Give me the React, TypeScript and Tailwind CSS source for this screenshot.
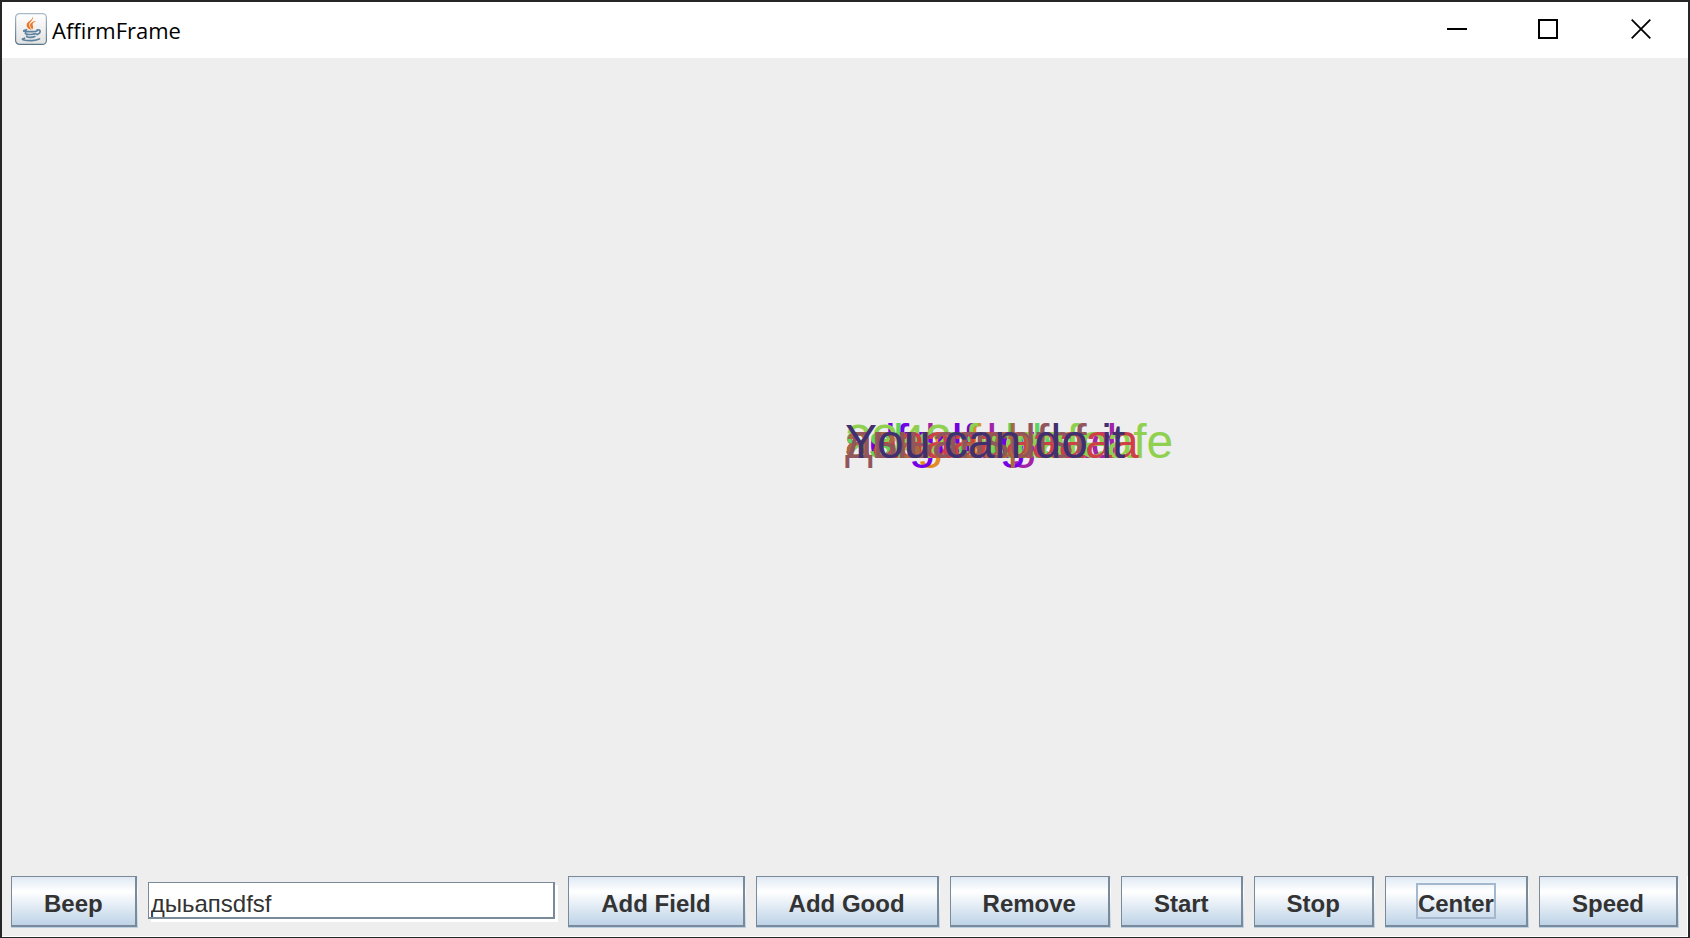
import React, { useState } from "react";

const phrases = [
  { text: "as ddskgaad", color: "text-[#a323a8]" },
  { text: "sssgsf", color: "text-[#e28c22]" },
  { text: "sdfgdfsg", color: "text-[#7300e6]" },
  { text: "ssksssddss", color: "text-[#5fd35f]" },
  { text: "2342 fweafeafe", color: "text-[#8fd14f]" },
  { text: "aaaaaaaaaaa", color: "text-[#cf3f48]" },
  { text: "авыаыф", color: "text-[#a86840]" },
  { text: "дыьапsdfsf", color: "text-[#91555c]" },
  { text: "You can do it", color: "text-[#403070]" },
];

function JavaIcon() {
  return (
    <svg viewBox="0 0 32 32" className="size-8" fill="none" aria-hidden="true">
      <defs>
        <linearGradient id="tile" x1="0" y1="0" x2="0" y2="1">
          <stop offset="0" stopColor="#ffffff" />
          <stop offset="1" stopColor="#e2e2e2" />
        </linearGradient>
        <linearGradient id="edge" x1="0" y1="0" x2="0" y2="1">
          <stop offset="0" stopColor="#a9bac8" />
          <stop offset="1" stopColor="#587489" />
        </linearGradient>
      </defs>
      <rect x="0.6" y="0.6" width="30.8" height="30.8" rx="4" fill="url(#tile)" stroke="url(#edge)" strokeWidth="1.2" />
      <path d="M17.800 3.500c1.400 3.500-3.600 5-3.600 8.300 0 2 1.400 3.200 2 5.200-3.200-1.500-5-3.200-4.500-5.600C12.300 8.300 17.600 7.500 17.800 3.500z" fill="#ee7625" />
      <path d="M21.500 7.800c-2.600 1.200-4.400 2.600-3.900 4.200.4 1.500 1.300 2.400-.6 4.900-.2-1.600-1.700-2.500-1.900-4.400-.2-2.400 2.800-4.200 6.400-4.700z" fill="#ee7625" />
      <path d="M11.500 16.700c-5 1.300-3 2 3.500 2 4 0 7-.6 7.500-1.200M22 17c4-1 4.300 3.200 0 4.600M10.500 20.200c-1 1.600 8 1.700 10.500.4M11.800 23.200c-.6 1.300 5.500 1.600 8 .3M9.500 25.200c-6 1.500 1.500 2.600 7.500 2.400 4-.1 6-.7 7.500-1.700" stroke="#5c829f" strokeWidth="1.700" strokeLinecap="round" />
    </svg>
  );
}

function PanelButton({ label, focused = false }: { label: string; focused?: boolean }) {
  return (
    <button
      type="button"
      className="flex h-[52px] shrink-0 bg-linear-to-b from-[#dde8f3] via-white via-30% to-[#b8cfe5] pr-px pb-px text-2xl leading-7 font-bold text-[#333333]"
    >
      <span className="flex h-full items-center border-t border-r-2 border-b-2 border-l border-[#7a8a99] px-[30px] pt-1.5">
        <span
          className={
            focused
              ? "-mt-1.5 flex h-9 items-center border-2 border-[#a3b8cc] pt-1.5"
              : "px-0.5"
          }
        >
          {label}
        </span>
      </span>
    </button>
  );
}

export default function App() {
  const [value, setValue] = useState("дыьапsdfsf");

  return (
    <div className="flex min-h-screen flex-col border-x-2 border-t-2 border-b border-[#262626] bg-[#eeeeee] font-['Liberation_Sans',Arial,sans-serif] [font-kerning:none]">
      <header className="flex h-14 items-center justify-between bg-white">
        <div className="flex items-center gap-1 pb-0.5 pl-[13px]">
          <JavaIcon />
          <h1 className="px-px pt-0.5 font-['Open_Sans',sans-serif] text-[22px] leading-8 text-black [font-variant-ligatures:none]">
            AffirmFrame
          </h1>
        </div>
        <div className="flex h-full pb-0.5 text-black">
          <button type="button" aria-label="Minimize" className="grid w-[91px] place-items-center">
            <svg viewBox="0 0 20 20" className="size-5" shapeRendering="crispEdges">
              <path d="M0 9h20v2H0z" fill="currentColor" />
            </svg>
          </button>
          <button type="button" aria-label="Maximize" className="grid w-[92px] place-items-center">
            <svg viewBox="0 0 20 20" className="size-5" shapeRendering="crispEdges">
              <path d="M1 1h18v18H1z" fill="none" stroke="currentColor" strokeWidth="2" />
            </svg>
          </button>
          <button type="button" aria-label="Close" className="grid w-[94px] place-items-center">
            <svg viewBox="0 0 20 20" className="size-5">
              <path d="M.7.7l18.600 18.600M19.300.7.7 19.300" fill="none" stroke="currentColor" strokeWidth="1.800" />
            </svg>
          </button>
        </div>
      </header>

      <main className="relative flex-1">
        {phrases.map((phrase) => (
          <p
            key={phrase.text}
            className={`absolute top-[360px] left-1/2 text-5xl leading-[48px] whitespace-nowrap ${phrase.color}`}
          >
            {phrase.text}
          </p>
        ))}
      </main>

      <footer className="flex items-center gap-2.5 border-r border-b border-white pr-2 pb-2 pl-[9px]">
        <PanelButton label="Beep" />
        <input
          type="text"
          aria-label="Affirmation"
          value={value}
          onChange={(event) => setValue(event.target.value)}
          className="mr-[3px] mb-[3px] h-[37px] min-w-0 flex-1 border-t border-r-2 border-b-2 border-l border-[#7a8a99] bg-white px-0.5 pt-2 text-2xl leading-7 text-[#333333] shadow-[3px_3px_0_white] outline-none"
        />
        <PanelButton label="Add Field" />
        <PanelButton label="Add Good" />
        <PanelButton label="Remove" />
        <PanelButton label="Start" />
        <PanelButton label="Stop" />
        <PanelButton label="Center" focused />
        <PanelButton label="Speed" />
      </footer>
    </div>
  );
}
